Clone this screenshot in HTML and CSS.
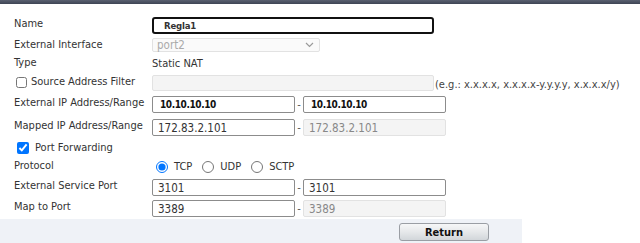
FILE: index.html
```html
<!DOCTYPE html>
<html lang="en">
<head>
  <meta charset="UTF-8">
  <title>Virtual IP</title>
  <link rel="stylesheet" href="styles.css">
</head>
<body>
  <div class="top-bar"></div>

  <div class="form">
    <div class="row row-name">
      <div class="label">Name</div>
      <input class="field name-field" type="text" value="Regla1">
    </div>

    <div class="row row-iface">
      <div class="label">External Interface</div>
      <div class="select-box">
        <span>port2</span>
        <svg class="chevron" width="9" height="6" viewBox="0 0 9 6"><path d="M1 1 L4.5 4.5 L8 1" fill="none" stroke="#9a9a9a" stroke-width="1.2"/></svg>
      </div>
    </div>

    <div class="row row-type">
      <div class="label">Type</div>
      <div class="value">Static NAT</div>
    </div>

    <div class="row row-source">
      <label class="label check-label"><input type="checkbox" class="check">Source Address Filter</label>
      <input class="field wide disabled" type="text" disabled>
      <span class="hint">(e.g.: x.x.x.x, x.x.x.x-y.y.y.y, x.x.x.x/y)</span>
    </div>

    <div class="row row-ext">
      <div class="label">External IP Address/Range</div>
      <input class="field half bold" type="text" value="10.10.10.10">
      <span class="dash">-</span>
      <input class="field half bold" type="text" value="10.10.10.10">
    </div>

    <div class="row row-mapped">
      <div class="label">Mapped IP Address/Range</div>
      <input class="field half" type="text" value="172.83.2.101">
      <span class="dash">-</span>
      <input class="field half disabled" type="text" value="172.83.2.101" disabled>
    </div>

    <div class="row row-pf">
      <label class="label check-label pf"><input type="checkbox" class="check" checked>Port Forwarding</label>
    </div>

    <div class="row row-proto">
      <div class="label">Protocol</div>
      <div class="radios">
        <label><input type="radio" name="proto" checked>TCP</label>
        <label><input type="radio" name="proto">UDP</label>
        <label><input type="radio" name="proto">SCTP</label>
      </div>
    </div>

    <div class="row row-svc">
      <div class="label">External Service Port</div>
      <input class="field half" type="text" value="3101">
      <span class="dash">-</span>
      <input class="field half" type="text" value="3101">
    </div>

    <div class="row row-map">
      <div class="label">Map to Port</div>
      <input class="field half" type="text" value="3389">
      <span class="dash">-</span>
      <input class="field half disabled" type="text" value="3389" disabled>
    </div>
  </div>

  <div class="footer">
    <button class="return-btn">Return</button>
  </div>
</body>
</html>
```

FILE: styles.css
```css
body {
    margin: 0;
    font-family: Tahoma, "DejaVu Sans Condensed", "Liberation Sans", sans-serif;
    font-size: 11px;
    color: #333;
    background: #fff;
    overflow: hidden;
}

.top-bar {
    height: 4px;
    background: linear-gradient(#5a6070, #3e4454);
}

.form {
    padding-top: 12px;
}

.row {
    display: flex;
    align-items: center;
    height: 18px;
}

.label {
    width: 138px;
    padding-left: 14px;
    flex-shrink: 0;
    color: #333;
    align-self: flex-start;
    line-height: 14px;
}

.row-name { height: 17px; margin-top: 1px; }
.row-iface { margin-top: 4px; height: 14px; }
.row-type { margin-top: 4px; height: 15px; }
.row-source { margin-top: 4px; height: 16px; }
.row-ext { margin-top: 5px; height: 17px; }
.row-mapped { margin-top: 6px; height: 17px; }
.row-pf { margin-top: 5px; height: 16px; }
.row-proto { margin-top: 2px; height: 15px; }
.row-svc { margin-top: 5px; height: 17px; }
.row-map { margin-top: 4px; height: 17px; }

.field {
    box-sizing: border-box;
    height: 100%;
    border: 1px solid #8c8c8c;
    border-radius: 2px;
    padding: 0 5px;
    font-family: inherit;
    font-size: 11.5px;
    color: #333;
    background: #fff;
    margin: 0;
}

.name-field {
    width: 282px;
    border: 2px solid #111;
    border-radius: 3px;
    font-weight: bold;
    padding-left: 10px;
    font-size: 9.5px;
    letter-spacing: -0.2px;
}

.wide { width: 282px; }
.half { width: 143px; }

.bold {
    font-weight: bold;
    padding-left: 7px;
    font-size: 10px;
    letter-spacing: -0.4px;
    color: #111;
}

.disabled {
    background: #f4f4f4;
    border-color: #e2e2e2;
    color: #888;
}

.dash {
    width: 8px;
    text-align: center;
    color: #555;
}

.select-box {
    box-sizing: border-box;
    width: 168px;
    height: 100%;
    border: 1px solid #e2e2e2;
    border-radius: 2px;
    background: #fafafa;
    color: #aaa;
    display: flex;
    align-items: center;
    justify-content: space-between;
    padding: 0 5px 0 4px;
    font-size: 11.5px;
}

.value {
    color: #333;
}

.hint {
    margin-left: 1px;
    color: #444;
    align-self: flex-end;
}

.check-label {
    display: flex;
    align-items: center;
    padding-left: 16px;
    width: 136px;
}

.check {
    margin: 0 4px 0 0;
    width: 11px;
    height: 11px;
}

.pf .check {
    width: 12px;
    height: 12px;
    margin: 0 6px 0 1px;
}

.radios {
    display: flex;
    gap: 10px;
    padding-left: 4px;
}

.radios label {
    display: flex;
    align-items: center;
    gap: 6px;
}

.radios input {
    margin: 0;
    width: 12px;
    height: 12px;
}

.footer {
    margin-top: 2px;
    width: 522px;
    height: 26px;
    background: #eff2f7;
    display: flex;
    align-items: center;
    justify-content: flex-end;
    padding-right: 33px;
    box-sizing: border-box;
}

.return-btn {
    width: 90px;
    height: 18px;
    border: 1px solid #9a9ea4;
    border-radius: 3px;
    background: linear-gradient(#f6f7f8, #e6e8ea 50%, #d2d6da);
    font-family: inherit;
    font-size: 11px;
    font-weight: bold;
    color: #111;
    padding: 0;
}
```
